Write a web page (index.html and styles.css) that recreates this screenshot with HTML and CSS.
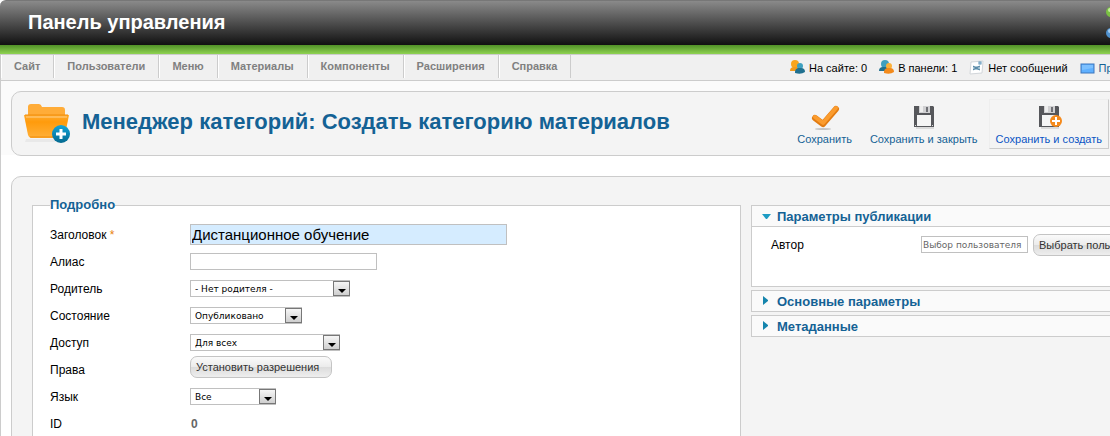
FILE: index.html
```
<!DOCTYPE html>
<html lang="ru">
<head>
    <meta charset="UTF-8">
    <meta name="viewport" content="width=device-width, initial-scale=1.0">
    <title>Панель управления</title>
    <link rel="stylesheet" href="styles.css">
</head>
<body>
    <header class="top">
        <h1 class="top-title">Панель управления</h1>
        <svg class="logo" width="32" height="32" viewBox="0 0 32 32">
            <path d="M5 5L27 27" stroke="#f9a541" stroke-width="4"/>
            <path d="M5 27L27 5" stroke="#5091cd" stroke-width="4"/>
            <circle cx="5" cy="5" r="5" fill="#7ac143"/>
            <circle cx="4" cy="3" r="2" fill="#c5eca0"/>
            <circle cx="5" cy="26" r="5" fill="#5091cd"/>
            <circle cx="4" cy="24" r="2" fill="#a9cff0"/>
            <circle cx="27" cy="5" r="5" fill="#f9a541"/>
            <circle cx="27" cy="26" r="5" fill="#f44321"/>
        </svg>
    </header>

    <div class="page">
        <div class="menu-bar">
            <nav class="menu">
                <a href="#">Сайт</a>
                <a href="#">Пользователи</a>
                <a href="#">Меню</a>
                <a href="#">Материалы</a>
                <a href="#">Компоненты</a>
                <a href="#">Расширения</a>
                <a href="#">Справка</a>
            </nav>
            <div class="status">
                <span class="status-item">
                    <svg width="15" height="15" viewBox="0 0 15 15">
                        <circle cx="5" cy="4" r="4" fill="#f9a51e"/>
                        <path d="M0 11q0-4 4-4h3q3 1 3 4z" fill="#f39a1b"/>
                        <circle cx="10" cy="6" r="3" fill="#3fa0bf"/>
                        <path d="M5 12q0-3 3-4h3q4 0 4 4q-4 3-10 1z" fill="#20708f"/>
                    </svg>
                    На сайте: 0
                </span>
                <span class="status-item">
                    <svg width="15" height="15" viewBox="0 0 15 15">
                        <circle cx="6" cy="4" r="4" fill="#3fa0bf"/>
                        <path d="M0 11q0-4 4-4h3q3 1 3 4z" fill="#20708f"/>
                        <circle cx="10" cy="6" r="3" fill="#fbb13a"/>
                        <path d="M5 12q0-3 3-4h3q4 0 4 4q-4 3-10 1z" fill="#f38a1b"/>
                    </svg>
                    В панели: 1
                </span>
                <span class="status-item">
                    <svg width="15" height="15" viewBox="0 0 15 15">
                        <path d="M2 2L14 1L13 13L1 14z" fill="#fff" stroke="#d2d6da"/>
                        <path d="M4 6h7v4H4z" fill="#a9c6d6"/>
                        <path d="M4 6l3 2l4-2M4 10l3-2l4 2" fill="none" stroke="#4c7f9e"/>
                        <rect x="10" y="2" width="2" height="2" fill="#fff" stroke="#5b93b8"/>
                    </svg>
                    Нет сообщений
                </span>
                <a class="status-item" href="#">
                    <svg width="15" height="15" viewBox="0 0 15 15">
                        <rect x="1" y="4" width="13" height="9" fill="#5fb0ff" stroke="#3d76bd"/>
                        <path d="M2 5h11v3L2 10z" fill="#7cc0ff"/>
                    </svg>
                    Просмотр сайта
                </a>
            </div>
        </div>

        <div class="heading-area">
            <div class="heading-box">
                <svg class="folder" width="48" height="48" viewBox="0 0 48 48">
                    <defs>
                        <linearGradient id="front" x1="0" y1="0" x2="0" y2="1">
                            <stop offset="0" stop-color="#ffaa2e"/>
                            <stop offset=".3" stop-color="#ff9b0c"/>
                            <stop offset="1" stop-color="#ffb03a"/>
                        </linearGradient>
                        <linearGradient id="plus" x1="0" y1="0" x2="0" y2="1">
                            <stop offset="0" stop-color="#12a5da"/>
                            <stop offset="1" stop-color="#04698f"/>
                        </linearGradient>
                    </defs>
                    <path d="M3 39h30v3H2z" fill="#e9e9e9"/>
                    <path d="M5 19V7q0-3 3-3h8q2 0 3 3h20q3 0 3 3v9z" fill="#ffac38"/>
                    <path d="M1 15h45l-4 20q-1 3-3 3H8q-2 0-3-3z" fill="url(#front)"/>
                    <path d="M2 15h43M7 37h31" stroke="#f18d0a" fill="none"/>
                    <path d="M3 17h41" stroke="#ffd08a"/>
                    <circle cx="38" cy="34" r="9" fill="url(#plus)"/>
                    <path d="M38 29v10M33 34h10" stroke="#fff" stroke-width="3"/>
                </svg>
                <h2 class="heading">Менеджер категорий: Создать категорию материалов</h2>
                <div class="toolbar">
                    <button type="button" class="tool">
                        <svg width="32" height="32" viewBox="0 0 32 32">
                            <ellipse cx="14" cy="28" rx="8" ry="1" fill="#c4c4c4"/>
                            <path d="M6 17L14 23L27 8" fill="none" stroke="#e27c12" stroke-width="6" stroke-linejoin="round" stroke-linecap="round"/>
                            <path d="M6 16L14 22L27 7" fill="none" stroke="#fb9c2e" stroke-width="4" stroke-linejoin="round" stroke-linecap="round"/>
                        </svg>
                        Сохранить
                    </button>
                    <button type="button" class="tool">
                        <svg width="32" height="32" viewBox="0 0 32 32">
                            <path d="M8 26h18v2H8z" fill="#dadada"/>
                            <path d="M6 5h19l1 1v20H6z" fill="#56575b"/>
                            <path d="M11 5h11v7H11z" fill="#d0d0d2"/>
                            <path d="M12 5h3v6h-3z" fill="#eee"/>
                            <path d="M18 6h2v5h-2z" fill="#6f7075"/>
                            <path d="M9 14h14v11H9z" fill="#f5f5f5"/>
                            <path d="M7 24h1v1H7zM24 24h1v1h-1z" fill="#ddd"/>
                        </svg>
                        Сохранить и закрыть
                    </button>
                    <button type="button" class="tool tool-active">
                        <svg width="32" height="32" viewBox="0 0 32 32">
                            <path d="M8 26h18v2H8z" fill="#dadada"/>
                            <path d="M6 5h19l1 1v20H6z" fill="#56575b"/>
                            <path d="M11 5h11v7H11z" fill="#d0d0d2"/>
                            <path d="M12 5h3v6h-3z" fill="#eee"/>
                            <path d="M18 6h2v5h-2z" fill="#6f7075"/>
                            <path d="M9 14h14v11H9z" fill="#f5f5f5"/>
                            <circle cx="23" cy="20" r="6" fill="#f58a1c"/>
                            <path d="M23 16v8M19 20h8" stroke="#fff" stroke-width="2"/>
                        </svg>
                        Сохранить и создать
                    </button>
                </div>
            </div>
        </div>

        <form class="content">
            <fieldset class="details">
                <legend>Подробно</legend>
                <div class="row">
                    <label for="title">Заголовок <span class="star">*</span></label>
                    <input id="title" class="field title-field" type="text" value="Дистанционное обучение">
                </div>
                <div class="row">
                    <label for="alias">Алиас</label>
                    <input id="alias" class="field alias-field" type="text">
                </div>
                <div class="row">
                    <label for="parent">Родитель</label>
                    <span class="select parent-select">
                        <select id="parent"><option>- Нет родителя -</option></select>
                        <span class="arrow"></span>
                    </span>
                </div>
                <div class="row">
                    <label for="state">Состояние</label>
                    <span class="select state-select">
                        <select id="state"><option>Опубликовано</option></select>
                        <span class="arrow"></span>
                    </span>
                </div>
                <div class="row">
                    <label for="access">Доступ</label>
                    <span class="select access-select">
                        <select id="access"><option>Для всех</option></select>
                        <span class="arrow"></span>
                    </span>
                </div>
                <div class="row">
                    <label for="rules">Права</label>
                    <button id="rules" type="button" class="btn">Установить разрешения</button>
                </div>
                <div class="row">
                    <label for="language">Язык</label>
                    <span class="select language-select">
                        <select id="language"><option>Все</option></select>
                        <span class="arrow"></span>
                    </span>
                </div>
                <div class="row">
                    <label for="id">ID</label>
                    <output id="id" class="id-value">0</output>
                </div>
            </fieldset>

            <div class="panels">
                <section class="panel">
                    <h3 class="panel-title">
                        <svg width="10" height="10" viewBox="0 0 10 10"><path d="M0 3h9L5 8H4z" fill="#1d9cc4"/></svg>
                        <a href="#">Параметры публикации</a>
                    </h3>
                    <div class="panel-body">
                        <label for="author">Автор</label>
                        <input id="author" class="field author-field" type="text" value="Выбор пользователя">
                        <button type="button" class="btn">Выбрать пользователя</button>
                    </div>
                </section>
                <section class="panel">
                    <h3 class="panel-title">
                        <svg width="10" height="10" viewBox="0 0 10 10"><path d="M1 0l5 4v1L1 9z" fill="#1585ad"/></svg>
                        <a href="#">Основные параметры</a>
                    </h3>
                </section>
                <section class="panel">
                    <h3 class="panel-title">
                        <svg width="10" height="10" viewBox="0 0 10 10"><path d="M1 0l5 4v1L1 9z" fill="#1585ad"/></svg>
                        <a href="#">Метаданные</a>
                    </h3>
                </section>
            </div>
        </form>
    </div>
</body>
</html>
```
FILE: styles.css
```
* {
    box-sizing: border-box;
}

body {
    margin: 0;
    height: 100vh;
    overflow: hidden;
    background: #fff;
    color: #000;
    font-family: "Liberation Sans", Arial, sans-serif;
    font-size: 12px;
    white-space: nowrap;
}

h1, h2, h3 {
    margin: 0;
}

a {
    color: #146295;
    text-decoration: none;
}

svg {
    flex: none;
}

input, select, button {
    font-family: inherit;
    font-size: 11px;
    margin: 0;
}

/* Header */
.top {
    display: flex;
    align-items: center;
    justify-content: space-between;
    height: 54px;
    padding: 0 0 10px 28px;
    border-top: 1px solid #777;
    border-top-left-radius: 6px;
    background:
        linear-gradient(#519127, #8fd352) bottom / 100% 9px no-repeat,
        linear-gradient(#8a8a8a, #111 44px);
}

.top-title {
    color: #fff;
    font-size: 20px;
}

.logo {
    margin-right: -28px;
}

.page {
    border-left: 1px solid #ccc;
}

/* Menu and status */
.menu-bar {
    display: grid;
    grid-template-columns: 1fr 320px;
    height: 27px;
    border-top: 1px solid #ccc;
    border-bottom: 1px solid #ccc;
    background: #f0f0f0;
}

.menu {
    display: flex;
    height: 23px;
}

.menu a {
    padding: 0 13px 0 12px;
    border-right: 1px solid #ccc;
    border-left: 1px solid #fff;
    color: #808080;
    font-size: 11px;
    font-weight: bold;
    line-height: 23px;
}

.status {
    display: flex;
    gap: 12px;
    font-size: 11px;
}

.status-item {
    display: flex;
    align-items: center;
    gap: 4px;
}

/* Page heading and toolbar */
.heading-area {
    padding: 10px 0 0 10px;
    background: linear-gradient(#fbfbfb, #fbfbfb) top / 100% 74px no-repeat;
}

.heading-box {
    display: flex;
    align-items: center;
    height: 65px;
    margin-right: -12px;
    padding: 0 12px 0 11px;
    border: 1px solid #ccc;
    border-radius: 10px;
    background: #f4f4f4;
}

.heading {
    flex: 1;
    padding: 0 0 3px 11px;
    color: #146295;
    font-size: 22px;
}

.toolbar {
    display: flex;
    gap: 4px;
}

.tool {
    display: flex;
    flex-direction: column;
    align-items: center;
    height: 50px;
    padding: 1px 6px 4px;
    border: 1px solid transparent;
    background: none;
    color: #146295;
}

.tool-active {
    border-color: #eee #ccc #ccc #eee;
    color: #0b55c4;
}

/* Form */
.content {
    display: grid;
    grid-template-columns: 1fr 370px;
    gap: 10px;
    align-items: start;
    margin: 20px -12px 0 10px;
    padding: 20px 0 20px 20px;
    border: 1px solid #ccc;
    border-radius: 10px;
    background: #f4f4f4;
}

.details {
    margin: 0;
    padding: 8px 17px;
    border: 1px solid #ccc;
    background: #fff;
}

.details legend {
    padding: 0;
    color: #146295;
    font-size: 13px;
    font-weight: bold;
    line-height: 16px;
}

.row {
    display: grid;
    grid-template-columns: 140px 1fr;
    align-items: center;
    justify-items: start;
    height: 27px;
}

.row .btn {
    align-self: start;
}

.star {
    color: #e8820c;
}

.field {
    height: 17px;
    padding: 0 1px;
    border: 1px solid #c0c0c0;
    background: #fff;
}

.title-field {
    width: 317px;
    height: 21px;
    background: #d5ecff;
    font-size: 15px;
}

.alias-field {
    width: 187px;
}

.select {
    display: flex;
    position: relative;
    height: 17px;
}

.select select {
    width: 100%;
    padding: 0 4px;
    border: 1px solid #c0c0c0;
    border-radius: 0;
    background: #fff;
    color: #000;
    font-family: "DejaVu Sans", Verdana, sans-serif;
    font-size: 9px;
    appearance: none;
}

.arrow {
    position: absolute;
    top: 1px;
    right: 0;
    width: 17px;
    height: 15px;
    border: 1px solid #777;
    background: linear-gradient(#f6f6f6, #cfcfcf);
    pointer-events: none;
}

.arrow::after {
    content: "";
    position: absolute;
    top: 7px;
    left: 4px;
    border: 4px solid transparent;
    border-top-color: #000;
    border-bottom: 0;
}

.parent-select {
    width: 160px;
}

.state-select {
    width: 112px;
}

.access-select {
    width: 150px;
}

.language-select {
    width: 86px;
}

.btn {
    height: 22px;
    padding: 0 12px 0 5px;
    border: 1px solid #c4c4c4;
    border-radius: 7px;
    background: linear-gradient(#fafafa, #ebebeb 50%, #dcdcdc 51%, #eee);
    color: #333;
}

.id-value {
    padding-left: 1px;
    color: #666;
    font-weight: bold;
}

/* Option panels */
.panels {
    display: grid;
    gap: 3px;
    padding-top: 8px;
}

.panel {
    border: 1px solid #ccc;
    background: #fff;
}

.panel-title {
    display: flex;
    align-items: center;
    gap: 5px;
    height: 20px;
    padding-left: 10px;
    background: #fafafa;
    font-size: 13px;
}

.panel-body {
    display: grid;
    grid-template-columns: 150px 107px auto;
    align-items: center;
    height: 60px;
    padding: 0 0 24px 19px;
    border-top: 1px solid #ccc;
}

.author-field {
    width: 107px;
    color: #666;
    font-family: "DejaVu Sans", Verdana, sans-serif;
    font-size: 9px;
}

.panel-body .btn {
    margin-left: 5px;
}
```
